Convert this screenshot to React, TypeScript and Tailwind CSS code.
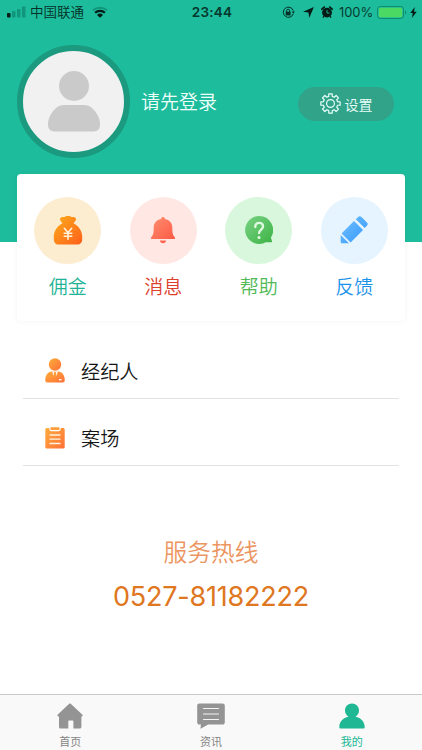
import React from "react";

const MoneyBagIcon = () => (
  <svg width="30" height="30" viewBox="0 0 30 30">
    <defs>
      <linearGradient id="bag" x1="0" y1="0" x2="1" y2="1">
        <stop offset="0.1" stopColor="#fda51c" />
        <stop offset="1" stopColor="#fe5f1a" />
      </linearGradient>
    </defs>
    <path
      d="M9.500 8.200C7.700 5.800 6.500 4.900 7.100 3.500 7.700 2.200 9.600 2 10.800 2.100c1.100.1 1.500-.8 2.700-1h3c1.200.2 1.600 1.100 2.700 1 1.200-.1 3.100.1 3.700 1.400.6 1.400-.6 2.300-2.400 4.700 4.500 2.300 8.700 7.200 8.700 13.400v2.600c0 3.200-1.700 5.300-5 5.300H5.800c-3.300 0-5-2.100-5-5.300v-2.600C.8 15.400 5 10.500 9.500 8.200z"
      fill="url(#bag)"
    />
    <path
      d="M11.300 13.300l3.700 4.200 3.700-4.200M15 17.500V24.300M11.200 18.200h7.600M11.200 21.300h7.600"
      fill="none"
      stroke="#fff0d8"
      strokeWidth="1.600"
      strokeLinecap="round"
    />
  </svg>
);

const BellIcon = () => (
  <svg width="26" height="28" viewBox="0 0 26 28">
    <defs>
      <linearGradient id="bell" x1="0" y1="0" x2="1" y2="1">
        <stop offset="0.1" stopColor="#fe8a6c" />
        <stop offset="1" stopColor="#fc5a45" />
      </linearGradient>
    </defs>
    <path
      d="M11 3.100a2 2 0 1 1 4 0C19.700 4 22.300 7.300 22.300 11.500c0 5 .3 7.300 2.500 9.800.8.900.5 1.700-.8 1.700H2c-1.300 0-1.600-.8-.8-1.700C3.400 18.800 3.700 16.500 3.700 11.500 3.700 7.300 6.300 4 11 3.100z"
      fill="url(#bell)"
    />
    <path d="M10 24.600h6c0 1.700-1.300 2.700-3 2.700s-3-1-3-2.700z" fill="#fc6650" />
  </svg>
);

const HelpIcon = () => (
  <svg width="28" height="28" viewBox="0 0 28 28">
    <defs>
      <linearGradient id="help" x1="0" y1="0" x2="1" y2="1">
        <stop offset="0.1" stopColor="#74cf7e" />
        <stop offset="1" stopColor="#3cb345" />
      </linearGradient>
    </defs>
    <path
      d="M14 0a14 14 0 1 0 6.800 26.300H26.400c.5 0 .8-.5.600-1l-1.100-3.800A14 14 0 0 0 14 0z"
      fill="url(#help)"
    />
    <path
      d="M10.300 11c-.2-2.500 1.400-4.100 3.800-4.100 2.300 0 3.900 1.500 3.900 3.600 0 2.900-3.900 3.300-3.900 6.500"
      fill="none"
      stroke="#e0f8e0"
      strokeWidth="2.400"
      strokeLinecap="round"
    />
    <circle cx="14" cy="21.500" r="1.500" fill="#e0f8e0" />
  </svg>
);

const PencilIcon = () => (
  <svg width="28" height="28" viewBox="0 0 28 28">
    <defs>
      <linearGradient id="pencil" x1="0" y1="0" x2="28" y2="28" gradientUnits="userSpaceOnUse">
        <stop offset="0.200" stopColor="#66b9ff" />
        <stop offset="0.800" stopColor="#3f9ffb" />
      </linearGradient>
    </defs>
    <g fill="url(#pencil)">
      <path d="M15.800 3.200L18.100 1c1.100-1.100 2.300-1.100 3.400 0l5.400 5.400c1.100 1.100 1.100 2.300 0 3.400l-2.200 2.300z" />
      <path d="M14 5l9 9-12.400 12.400-9-9z" />
      <path d="M.7 19.100L8.900 27.300H2.200C1.200 27.300.7 26.800.7 25.800z" />
    </g>
  </svg>
);

const AgentIcon = () => (
  <svg width="20" height="25" viewBox="0 0 20 25">
    <defs>
      <linearGradient id="agent" x1="0" y1="0" x2="1" y2="1">
        <stop offset="0" stopColor="#ffad3a" />
        <stop offset="1" stopColor="#ff7038" />
      </linearGradient>
    </defs>
    <g fill="url(#agent)">
      <circle cx="10" cy="6.500" r="6.200" />
      <path d="M6 13.500h8c3.300.9 5.700 4 5.700 8v1c0 1.300-.8 2-2 2H2.300c-1.200 0-2-.7-2-2v-1c0-4 2.400-7.100 5.700-8z" />
    </g>
    <path d="M7 13.300l1.600 5 .9-4.200h1l.9 4.200 1.600-5z" fill="#fff4e6" />
    <path d="M9.400 14h1.200l.8 3.700-1.400 1.800-1.400-1.800z" fill="#ff9a3a" />
    <path d="M14 21.700h2.600" stroke="#fff" strokeWidth="1.200" />
  </svg>
);

const ClipboardIcon = () => (
  <svg width="20" height="22" viewBox="0 0 20 22">
    <defs>
      <linearGradient id="board" x1="0" y1="0" x2="1" y2="1">
        <stop offset="0" stopColor="#ffac3c" />
        <stop offset="1" stopColor="#ff7038" />
      </linearGradient>
    </defs>
    <path
      d="M2 1h2.200c0 2.300.8 3.300 2.300 3.300h7c1.500 0 2.300-1 2.300-3.300H18c1 0 1.700.6 1.700 1.600v17.300c0 1-.6 1.600-1.700 1.600H2c-1.100 0-1.700-.6-1.700-1.600V2.600C.3 1.600 1 1 2 1z"
      fill="url(#board)"
    />
    <rect x="5.400" y="0.300" width="9.200" height="2.700" rx="0.800" fill="#ff9f3b" />
    <path
      d="M5 8h10M5 12.200h10M5 16.500h10"
      stroke="#fff2e2"
      strokeWidth="1.300"
      strokeLinecap="round"
    />
  </svg>
);

// Eight square teeth around a hollow hub
const GearIcon = () => {
  const points: string[] = [];
  for (let i = 0; i < 8; i++) {
    [
      [-14, 7.3],
      [-10, 9.8],
      [10, 9.8],
      [14, 7.3],
    ].forEach(([offset, radius]) => {
      const angle = ((i * 45 + offset) * Math.PI) / 180;
      points.push(
        `${(10.5 + radius * Math.sin(angle)).toFixed(2)},${(10.5 - radius * Math.cos(angle)).toFixed(2)}`
      );
    });
  }
  return (
    <svg width="21" height="21" viewBox="0 0 21 21" fill="none" stroke="#e9fffa" strokeWidth="1.200">
      <polygon points={points.join(" ")} strokeLinejoin="round" />
      <circle cx="10.500" cy="10.500" r="3.900" />
    </svg>
  );
};

const StatusBar = () => (
  <div className="grid h-6 grid-cols-[1fr_auto_1fr] items-center text-[#063c31]">
    <div className="flex items-center pl-[7px]">
      <svg width="19" height="12" viewBox="0 0 19 12">
        <rect x="0" y="7" width="3.500" height="4.500" rx="0.800" fill="#041d18" />
        <g fill="#12967b">
          <rect x="5" y="5" width="3.500" height="6.500" rx="0.800" />
          <rect x="10" y="3" width="3.500" height="8.500" rx="0.800" />
          <rect x="15" y="0.500" width="3.500" height="11" rx="0.800" />
        </g>
      </svg>
      <span className="ml-1 text-[13.500px] leading-6 font-[350] text-[#052f27]">中国联通</span>
      <svg className="ml-2" width="16" height="12" viewBox="0 0 16 12" fill="none">
        <path d="M1 4.300a10.500 10.500 0 0 1 14 0" stroke="#12967b" strokeWidth="2" />
        <path d="M3.100 6.700a7.200 7.200 0 0 1 9.800 0" stroke="#031a15" strokeWidth="2.200" />
        <path d="M5 8.900a4.500 4.500 0 0 1 6 0L8 11.700z" fill="#031a15" />
      </svg>
    </div>
    <span className="pl-0.5 text-[13.500px] font-semibold tracking-[0.200px] text-[#06372d]">23:44</span>
    <div className="flex items-center justify-end pr-[5px]">
      <svg width="13" height="13" viewBox="0 0 13 13" fill="none" stroke="#052f27">
        <path d="M11.300 7.800A5.100 5.100 0 1 1 11.300 4.700" />
        <path d="M9.700 5.600h3.200l-1.600 2.200z" fill="#052f27" stroke="none" />
        <rect x="3.700" y="5.700" width="4.900" height="3.700" fill="#052f27" stroke="none" />
        <path d="M4.700 6V4.700a1.450 1.450 0 0 1 2.900 0V6" />
      </svg>
      <svg className="ml-2" width="11" height="11" viewBox="0 0 11 11">
        <path d="M10.900.1L6.200 10.900 5.500 5.500.1 4.800z" fill="#031a15" />
      </svg>
      <svg className="ml-[7px]" width="12" height="12" viewBox="0 0 12 12">
        <circle cx="6" cy="6.600" r="4.900" fill="#031a15" />
        <path d="M.9 3.200L3.200 1.100M11.100 3.200L8.800 1.100" stroke="#031a15" strokeWidth="1.800" strokeLinecap="round" />
        <path d="M3 10.200l-1 1.400M9 10.200l1 1.400" stroke="#031a15" strokeWidth="1.300" />
        <path d="M6 4v3h2.500" stroke="#1dbc9c" strokeWidth="0.900" fill="none" />
      </svg>
      <span className="ml-1.5 w-[35px] pt-px text-[13px] tracking-[-0.100px] whitespace-nowrap">100%</span>
      <svg className="ml-[3px]" width="30" height="13" viewBox="0 0 30 13">
        <rect x="0.500" y="0.500" width="26" height="12" rx="2.800" fill="none" stroke="#118b70" />
        <rect x="1.800" y="1.800" width="23.400" height="9.400" rx="1.600" fill="#4bd964" />
        <path d="M28 4.500c1.700.7 1.700 3.300 0 4z" fill="#118b70" />
      </svg>
      <svg className="ml-[3px]" width="7" height="11" viewBox="0 0 7 11">
        <path d="M4.800 0L.3 6h2.500L1.900 11 6.700 4.700H4z" fill="#031a15" />
      </svg>
    </div>
  </div>
);

const shortcuts = [
  { title: "佣金", icon: MoneyBagIcon, circle: "bg-[#fcecd0]", color: "text-[#1fb495]" },
  { title: "消息", icon: BellIcon, circle: "bg-[#ffe8e4]", color: "text-[#dc412c]" },
  { title: "帮助", icon: HelpIcon, circle: "bg-[#d9f7dc]", color: "text-[#52b957]" },
  { title: "反馈", icon: PencilIcon, circle: "bg-[#e5f4ff]", color: "text-[#1a92ea]" },
];

const menuItems = [
  { title: "经纪人", icon: AgentIcon },
  { title: "案场", icon: ClipboardIcon },
];

const HomeIcon = () => (
  <svg width="26" height="26" viewBox="0 0 26 26">
    <path
      d="M12 .9c.7-.6 1.300-.6 2 0l11.200 10.700c.8.8.5 1.800-.6 1.800h-.2v10.300c0 1.200-.6 1.800-1.700 1.800h-6.300v-6.700c0-.8-.3-1.200-1-1.200h-3.100c-.7 0-1 .4-1 1.200v6.700H3.700c-1.200 0-1.700-.6-1.700-1.800V13.400h-.5c-1.100 0-1.500-1-.7-1.800z"
      fill="#949494"
    />
  </svg>
);

const NewsIcon = () => (
  <svg width="28" height="26" viewBox="0 0 28 26">
    <path
      d="M2.500.5h23c1.400 0 2.300.9 2.300 2.300v16.500c0 1.400-.9 2.300-2.300 2.300H11.200L3.500 25.800l.4-4.200H2.500C1.100 21.600.2 20.700.2 19.300V2.800C.2 1.400 1.100.5 2.500.5z"
      fill="#949494"
    />
    <path d="M6.500 5.500h15M6.500 11h15M6.500 16.500h15" stroke="#f4f4f4" strokeWidth="1.100" strokeLinecap="round" />
  </svg>
);

const MineIcon = () => (
  <svg width="26" height="26" viewBox="0 0 26 26">
    <path
      d="M13 .5c4 0 7 3.100 7 7 0 2.700-1.300 4.900-3.500 6.200 5.500 1.100 9 4.800 9.200 10 .1 1.200-.3 1.800-1.200 1.800h-23c-.9 0-1.300-.6-1.200-1.800.2-5.200 3.700-8.900 9.200-10C7.300 12.400 6 10.200 6 7.500c0-3.900 3-7 7-7z"
      fill="#20b795"
    />
  </svg>
);

const tabs = [
  { title: "首页", icon: HomeIcon, color: "text-[#858585]" },
  { title: "资讯", icon: NewsIcon, color: "text-[#858585]" },
  { title: "我的", icon: MineIcon, color: "text-[#20b795]" },
];

const App = () => {
  return (
    <div className="flex h-[750px] w-[422px] flex-col overflow-hidden bg-white font-['Inter','Noto_Sans_CJK_SC',sans-serif]">
      {/* Profile header */}
      <header className="h-[242px] shrink-0 bg-[#1dbc9c]">
        <StatusBar />
        <div className="mt-[21px] flex items-center pr-7 pl-[17px]">
          <div className="flex size-[113px] items-center justify-center rounded-full border-[6px] border-[#1b9a80] bg-[#f1f1f1]">
            <svg width="52" height="61" viewBox="0 0 52 61" fill="#cacaca">
              <circle cx="26" cy="15" r="15" />
              <path d="M15.500 34h21C44.500 34 52 45 52 53v1c0 4.500-3 6.500-7 6.500H7c-4 0-7-2-7-6.500v-1c0-8 7.500-19 15.500-19z" />
            </svg>
          </div>
          <span className="ml-[11px] pt-1 text-[19px] font-[350] text-[#f0fffb]">请先登录</span>
          <button className="mt-1 ml-auto flex h-[34px] w-24 items-center justify-center gap-1 rounded-full bg-[#31a389] text-[14px] font-[350] text-[#edfffb]">
            <GearIcon />
            <span className="pt-px">设置</span>
          </button>
        </div>
      </header>

      {/* Shortcuts */}
      <section className="relative mx-[17px] -mt-[68px] grid h-[147px] shrink-0 grid-cols-4 rounded-[4px] bg-white px-[3px] pt-[22.500px] shadow-[0_0_6px_rgba(0,0,0,0.05)]">
        {shortcuts.map(({ title, icon: Icon, circle, color }) => (
          <div key={title} className="flex flex-col items-center">
            <div className={`flex size-[67px] items-center justify-center rounded-full ${circle}`}>
              <Icon />
            </div>
            <span className={`mt-[10.500px] text-[19px] leading-7 font-[350] ${color}`}>{title}</span>
          </div>
        ))}
      </section>

      {/* Menu */}
      <nav className="mt-[10px] ml-[23px] w-[376px]">
        {menuItems.map(({ title, icon: Icon }) => (
          <div key={title} className="flex h-[67.500px] items-center border-b border-[#e2e2e2] pt-3 pl-[22px]">
            <Icon />
            <span className="ml-4 pt-1 text-[19.200px] font-[350] text-[#151515]">{title}</span>
          </div>
        ))}
      </nav>

      {/* Hotline */}
      <div className="mt-[69.500px] flex flex-col items-center">
        <span className="text-[23.700px] leading-[34px] font-[350] text-[#ec9560]">服务热线</span>
        <span className="mt-[11px] text-[27px] leading-8 tracking-[-0.200px] text-[#df7620]">0527-81182222</span>
      </div>

      {/* Tab bar */}
      <footer className="mt-auto grid h-14 shrink-0 grid-cols-3 border-t border-[#c9c9c9] bg-[#f9f9f9] pt-2">
        {tabs.map(({ title, icon: Icon, color }) => (
          <div key={title} className="flex flex-col items-center">
            <Icon />
            <span className={`mt-[5px] text-[11px] leading-4 ${color}`}>{title}</span>
          </div>
        ))}
      </footer>
    </div>
  );
};

export default App;
